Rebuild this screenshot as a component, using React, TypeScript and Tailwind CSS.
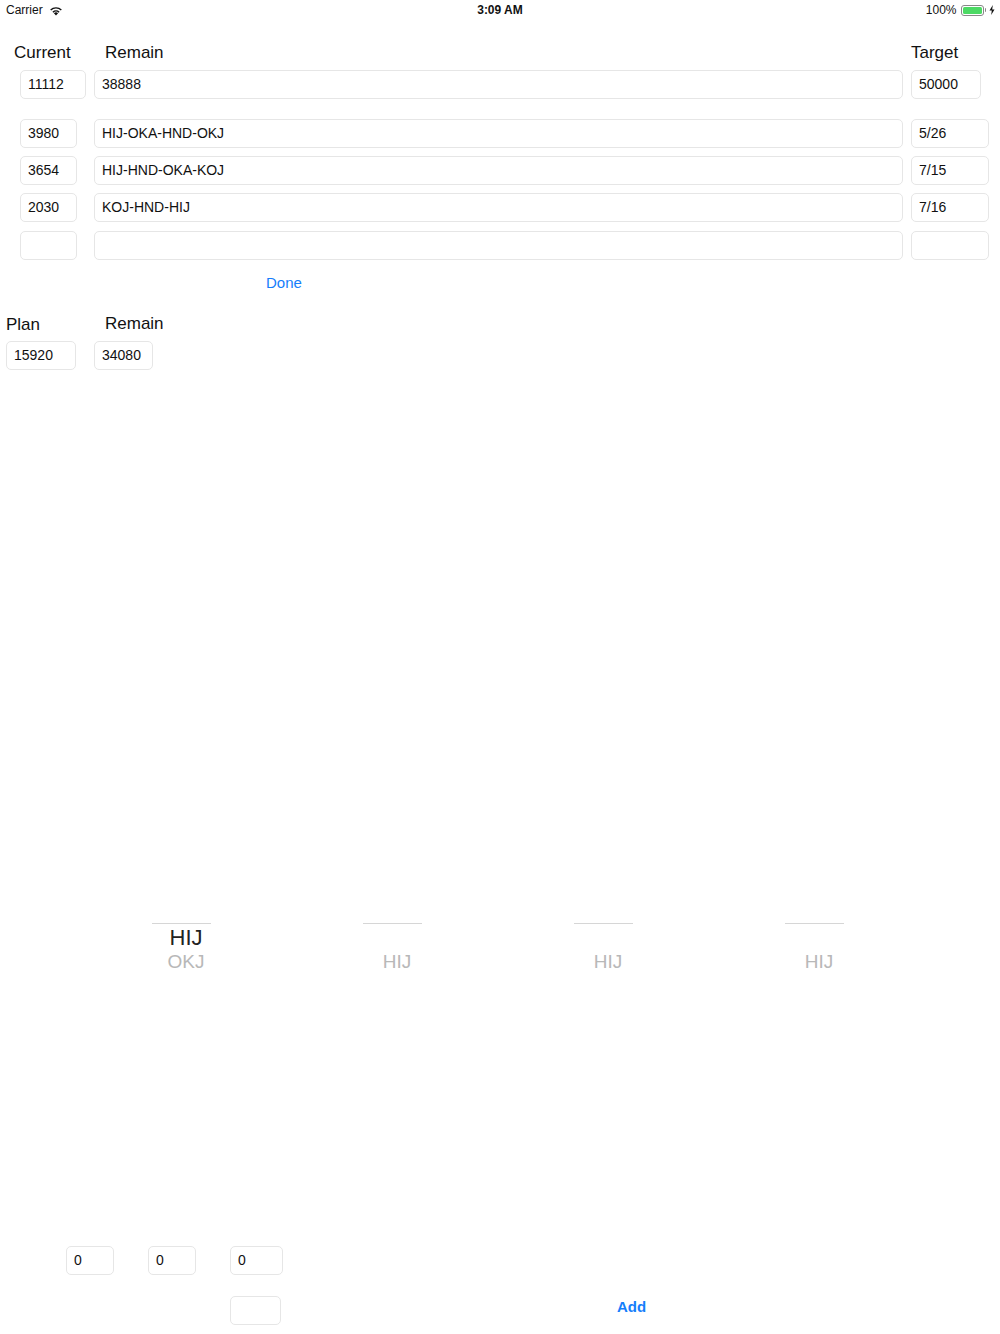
import React from "react";

const font = { fontFamily: '"Liberation Sans", Arial, sans-serif' };

function Box({ w, text, className = "" }: { w: string; text?: string; className?: string }) {
  return (
    <div
      className={`${w} h-[29px] shrink-0 rounded-[5px] border border-[#e6e6e6] bg-white flex items-center pl-[7px] text-[14px] text-[#111] ${className}`}
    >
      {text}
    </div>
  );
}

function Wifi() {
  return (
    <svg width="14" height="11" viewBox="0 0 14 11" className="ml-[6px]">
      <path d="M7 10.5 L4.9 8.3 A3 3 0 0 1 9.1 8.3 Z" fill="#111" />
      <path d="M3.4 6.8 A5.2 5.2 0 0 1 10.6 6.8 L9.6 7.8 A3.8 3.8 0 0 0 4.4 7.8 Z" fill="#111" />
      <path d="M1.2 4.6 A8.2 8.2 0 0 1 12.8 4.6 L11.8 5.6 A6.8 6.8 0 0 0 2.2 5.6 Z" fill="#111" />
    </svg>
  );
}

function Battery() {
  return (
    <div className="flex items-center ml-[4px]">
      <div className="w-[23px] h-[11px] rounded-[3px] border border-[#888] p-[1px]">
        <div className="w-full h-full rounded-[1.5px] bg-[#4cd964]" />
      </div>
      <div className="w-[1.5px] h-[4px] bg-[#888] rounded-r-[1px] ml-[1px]" />
      <svg width="6" height="10" viewBox="0 0 6 10" className="ml-[3px]">
        <path d="M3.8 0 L0.5 5.6 H2.8 L2.2 10 L5.5 4.4 H3.2 Z" fill="#111" />
      </svg>
    </div>
  );
}

function PickerCol({ selected, below }: { selected?: string; below: string }) {
  return (
    <div className="w-[59px] shrink-0 flex flex-col items-center">
      <div className="w-[59px] h-px bg-[#d6d6d6]" />
      <div className="h-[24px] mt-[2px] pl-[9px] flex items-center justify-center text-[22px] leading-none text-[#222] whitespace-nowrap">
        {selected ?? ""}
      </div>
      <div className="h-[22px] pl-[9px] flex items-center justify-center text-[19px] leading-none text-[#b8b8b8] whitespace-nowrap">
        {below}
      </div>
    </div>
  );
}

export default function App() {
  return (
    <div className="w-[1000px] h-[1334px] bg-white overflow-hidden" style={font}>
      {/* status bar */}
      <div className="h-[20px] grid grid-cols-3 items-center text-[12px] text-[#111]">
        <div className="flex items-center pl-[6px]">
          <span>Carrier</span>
          <Wifi />
        </div>
        <div className="text-center font-bold">3:09 AM</div>
        <div className="flex items-center justify-end pr-[5px]">
          <span>100%</span>
          <Battery />
        </div>
      </div>

      {/* header labels */}
      <div className="mt-[22px] h-[20px] flex items-center text-[17px] text-[#111] leading-none">
        <div className="ml-[14px] w-[91px]">Current</div>
        <div className="flex-1">Remain</div>
        <div className="w-[89px]">Target</div>
      </div>

      {/* summary row */}
      <div className="mt-[8px] flex pl-[20px]">
        <Box w="w-[66px]" text="11112" />
        <Box w="w-[809px]" text="38888" className="ml-[8px]" />
        <Box w="w-[70px]" text="50000" className="ml-[8px]" />
      </div>

      {/* entries */}
      <div className="mt-[20px] flex flex-col gap-[8px] pl-[20px]">
        {[
          ["3980", "HIJ-OKA-HND-OKJ", "5/26"],
          ["3654", "HIJ-HND-OKA-KOJ", "7/15"],
          ["2030", "KOJ-HND-HIJ", "7/16"],
          ["", "", ""],
        ].map((r, i) => (
          <div key={i} className={`flex ${i === 3 ? "mt-[1px]" : ""}`}>
            <Box w="w-[57px]" text={r[0]} />
            <Box w="w-[809px]" text={r[1]} className="ml-[17px]" />
            <Box w="w-[78px]" text={r[2]} className="ml-[8px]" />
          </div>
        ))}
      </div>

      {/* done */}
      <div className="mt-[13px] h-[18px] flex items-center">
        <div className="ml-[266px] text-[15px] text-[#157efb] leading-none">Done</div>
      </div>

      {/* plan labels */}
      <div className="mt-[22px] h-[20px] flex items-center text-[17px] text-[#111] leading-none">
        <div className="ml-[6px] w-[99px] mt-[2px]">Plan</div>
        <div>Remain</div>
      </div>
      <div className="mt-[8px] flex pl-[6px]">
        <Box w="w-[70px]" text="15920" />
        <Box w="w-[59px]" text="34080" className="ml-[18px]" />
      </div>

      {/* picker */}
      <div className="mt-[553px] flex pl-[152px] gap-[152px]" style={font}>
        <PickerCol selected="HIJ" below="OKJ" />
        <PickerCol below="HIJ" />
        <PickerCol below="HIJ" />
        <PickerCol below="HIJ" />
      </div>

      {/* bottom fields */}
      <div className="mt-[274px] flex pl-[66px]">
        <Box w="w-[48px]" text="0" />
        <Box w="w-[48px]" text="0" className="ml-[34px]" />
        <Box w="w-[53px]" text="0" className="ml-[34px]" />
      </div>
      <div className="mt-[21px] flex items-center pl-[230px]">
        <Box w="w-[51px]" />
        <div className="ml-[336px] mb-[8px] text-[15px] font-bold text-[#157efb] leading-none">Add</div>
      </div>
    </div>
  );
}
